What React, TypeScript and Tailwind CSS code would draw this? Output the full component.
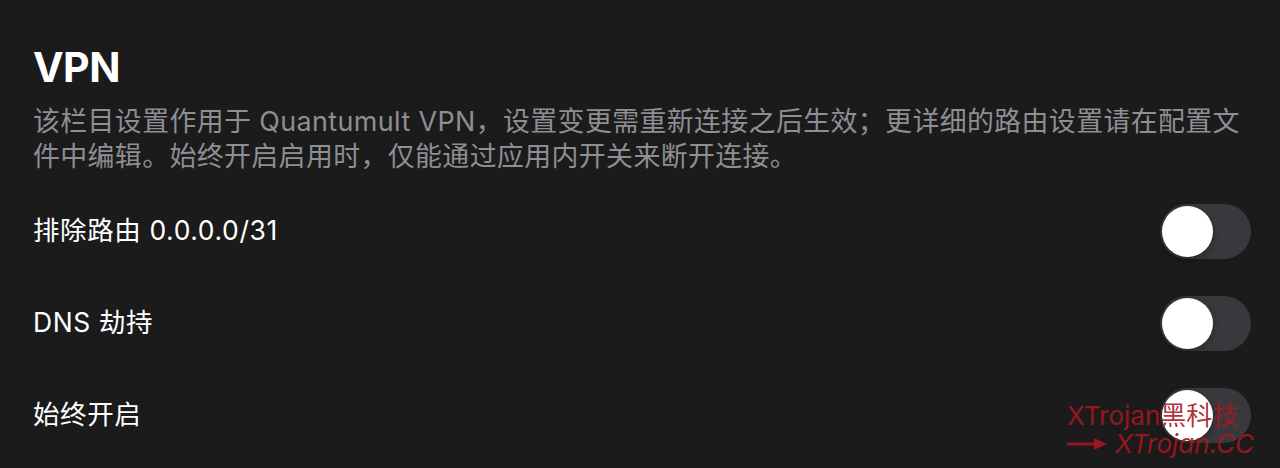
const font = "font-['Inter','Noto_Sans_CJK_SC',sans-serif]";

function Toggle() {
  return (
    <div className="flex h-[55px] w-[91px] items-center rounded-full bg-[#39393d] px-[2px]">
      <div className="h-[51px] w-[51px] rounded-full bg-white shadow-[0_2px_6px_rgba(0,0,0,0.35)]" />
    </div>
  );
}

const rows = ["排除路由 0.0.0.0/31", "DNS 劫持", "始终开启"];

export default function App() {
  return (
    <div className={`relative h-[468px] w-[1280px] overflow-hidden bg-[#1b1b1c] pl-[33px] pr-[29px] pt-[42px] ${font}`}>
      <h1 className="text-[41px] font-bold leading-[50px] tracking-[-0.5px] text-white">VPN</h1>
      <p className="mt-[12px] w-[1212px] text-[26.9px] leading-[35px] tracking-[0.4px] text-[#8e8e93]">
        该栏目设置作用于 Quantumult VPN，设置变更需重新连接之后生效；更详细的路由设置请在配置文件中编辑。始终开启启用时，仅能通过应用内开关来断开连接。
      </p>
      <div className="mt-[11px] flex flex-col">
        {rows.map((label) => (
          <div key={label} className="flex h-[92px] items-center justify-between">
            <span className="text-[26.5px] tracking-[0.6px] text-white">{label}</span>
            <Toggle />
          </div>
        ))}
      </div>

      {/* watermark */}
      <div className="absolute right-[26px] top-[402px] flex flex-col items-start text-[#a8161d]/90">
        <span className="text-[26px] leading-[28px]">XTrojan黑科技</span>
        <span className="flex items-center gap-[8px] text-[26px] italic leading-[28px]">
          <svg width="40" height="14" viewBox="0 0 40 14">
            <path d="M0 7H31" stroke="currentColor" strokeWidth="3" />
            <path d="M27 1L40 7L27 13Z" fill="currentColor" />
          </svg>
          XTrojan.CC
        </span>
      </div>
    </div>
  );
}
